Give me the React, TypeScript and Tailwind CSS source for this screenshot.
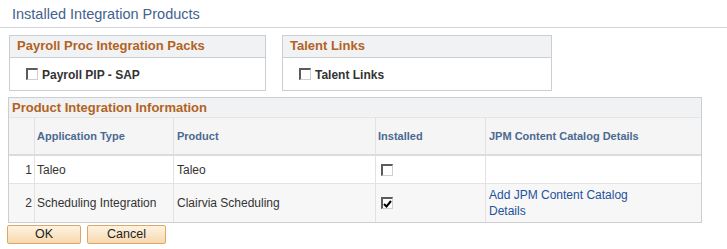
import type { ReactNode } from "react";

const COLS = "grid grid-cols-[26px_139px_202px_110px_1fr]";

function Check({ checked = false }: { checked?: boolean }) {
  return (
    <span className="flex h-[12px] w-[12px] shrink-0 items-center justify-center border-t-2 border-l-2 border-b border-r border-t-[#5c5c5c] border-l-[#5c5c5c] border-b-[#cfcfcf] border-r-[#cfcfcf] bg-white">
      {checked && (
        <svg width="9" height="8" viewBox="0 0 9 8">
          <path d="M1 4 L3.5 6.5 L8 1" fill="none" stroke="#000" strokeWidth="2" />
        </svg>
      )}
    </span>
  );
}

function GroupBox({ title, label, width }: { title: string; label: string; width: string }) {
  return (
    <div className={`${width} h-[56px] border border-[#cbcfd3] bg-white`}>
      <div className="h-[22px] border-b border-[#cbcfd3] bg-[#f0f2f3] pl-[7px] text-[13px] font-bold leading-[19px] text-[#b3621f]">
        {title}
      </div>
      <div className="flex items-start gap-[4px] pl-[16px] pt-[10px]">
        <Check />
        <span className="text-[12px] font-bold leading-[15px] text-[#333]">{label}</span>
      </div>
    </div>
  );
}

function Cell({ children, last, className = "" }: { children?: ReactNode; last?: boolean; className?: string }) {
  return (
    <div className={`flex items-center ${last ? "" : "border-r border-[#e2e2e2]"} ${className}`}>
      {children}
    </div>
  );
}

const ROWS = [
  { n: 1, type: "Taleo", product: "Taleo", installed: false, link: false },
  { n: 2, type: "Scheduling Integration", product: "Clairvia Scheduling", installed: true, link: true },
];

export default function App() {
  return (
    <div className="h-[249px] w-[727px] overflow-hidden bg-white font-['Liberation_Sans',Arial,sans-serif] text-[#333]">
      <div className="h-[28px] border-b border-[#d3d6d9] pl-[12px] pt-[5px] text-[14.5px] leading-[18px] text-[#42628e]">
        Installed Integration Products
      </div>

      <div className="mt-[7px] flex gap-[16px] pl-[9px]">
        <GroupBox title="Payroll Proc Integration Packs" label="Payroll PIP - SAP" width="w-[257px]" />
        <GroupBox title="Talent Links" label="Talent Links" width="w-[270px]" />
      </div>

      <div className="ml-[8px] mt-[6px] w-[694px] border border-[#cbcfd3]">
        <div className="h-[19px] bg-[#f0f2f3] pl-[3px] text-[13px] font-bold leading-[19px] text-[#b3621f]">
          Product Integration Information
        </div>
        <div className={`${COLS} h-[39px] border-t border-b-2 border-t-[#e3e5e7] border-b-[#dcdcdc] bg-[#f5f5f5] text-[11px] font-bold text-[#4b6991]`}>
          <Cell className="border-[#dddddd]" />
          <Cell className="border-[#dddddd] pl-[2px]">Application Type</Cell>
          <Cell className="border-[#dddddd] pl-[3px]">Product</Cell>
          <Cell className="border-[#dddddd] pl-[2px]">Installed</Cell>
          <Cell last className="pl-[3px]">JPM Content Catalog Details</Cell>
        </div>
        {ROWS.map((r) => (
          <div
            key={r.n}
            className={`${COLS} text-[12px] leading-[16px] ${
              r.n === 1 ? "h-[28px] border-b border-[#e3e3e3] bg-white" : "h-[38px] bg-[#f7f7f7]"
            }`}
          >
            <Cell className="justify-end pr-[2px]">{r.n}</Cell>
            <Cell className="pl-[2px]">{r.type}</Cell>
            <Cell className="pl-[3px]">{r.product}</Cell>
            <Cell className="pl-[5px]">
              <Check checked={r.installed} />
            </Cell>
            <Cell last className="pl-[3px]">
              {r.link && (
                <a href="#" className="max-w-[145px] text-[#24529a]">
                  Add JPM Content Catalog Details
                </a>
              )}
            </Cell>
          </div>
        ))}
      </div>

      <div className="ml-[7px] mt-[2px] flex gap-[6px]">
        <button className="h-[19px] w-[74px] rounded-[2px] border border-[#dba86a] bg-gradient-to-b from-[#fdf3e3] to-[#f8d9ac] text-[12.5px] leading-[17px] text-[#222]">
          OK
        </button>
        <button className="h-[19px] w-[79px] rounded-[2px] border border-[#dba86a] bg-gradient-to-b from-[#fdf3e3] to-[#f8d9ac] text-[12.5px] leading-[17px] text-[#222]">
          Cancel
        </button>
      </div>
    </div>
  );
}
